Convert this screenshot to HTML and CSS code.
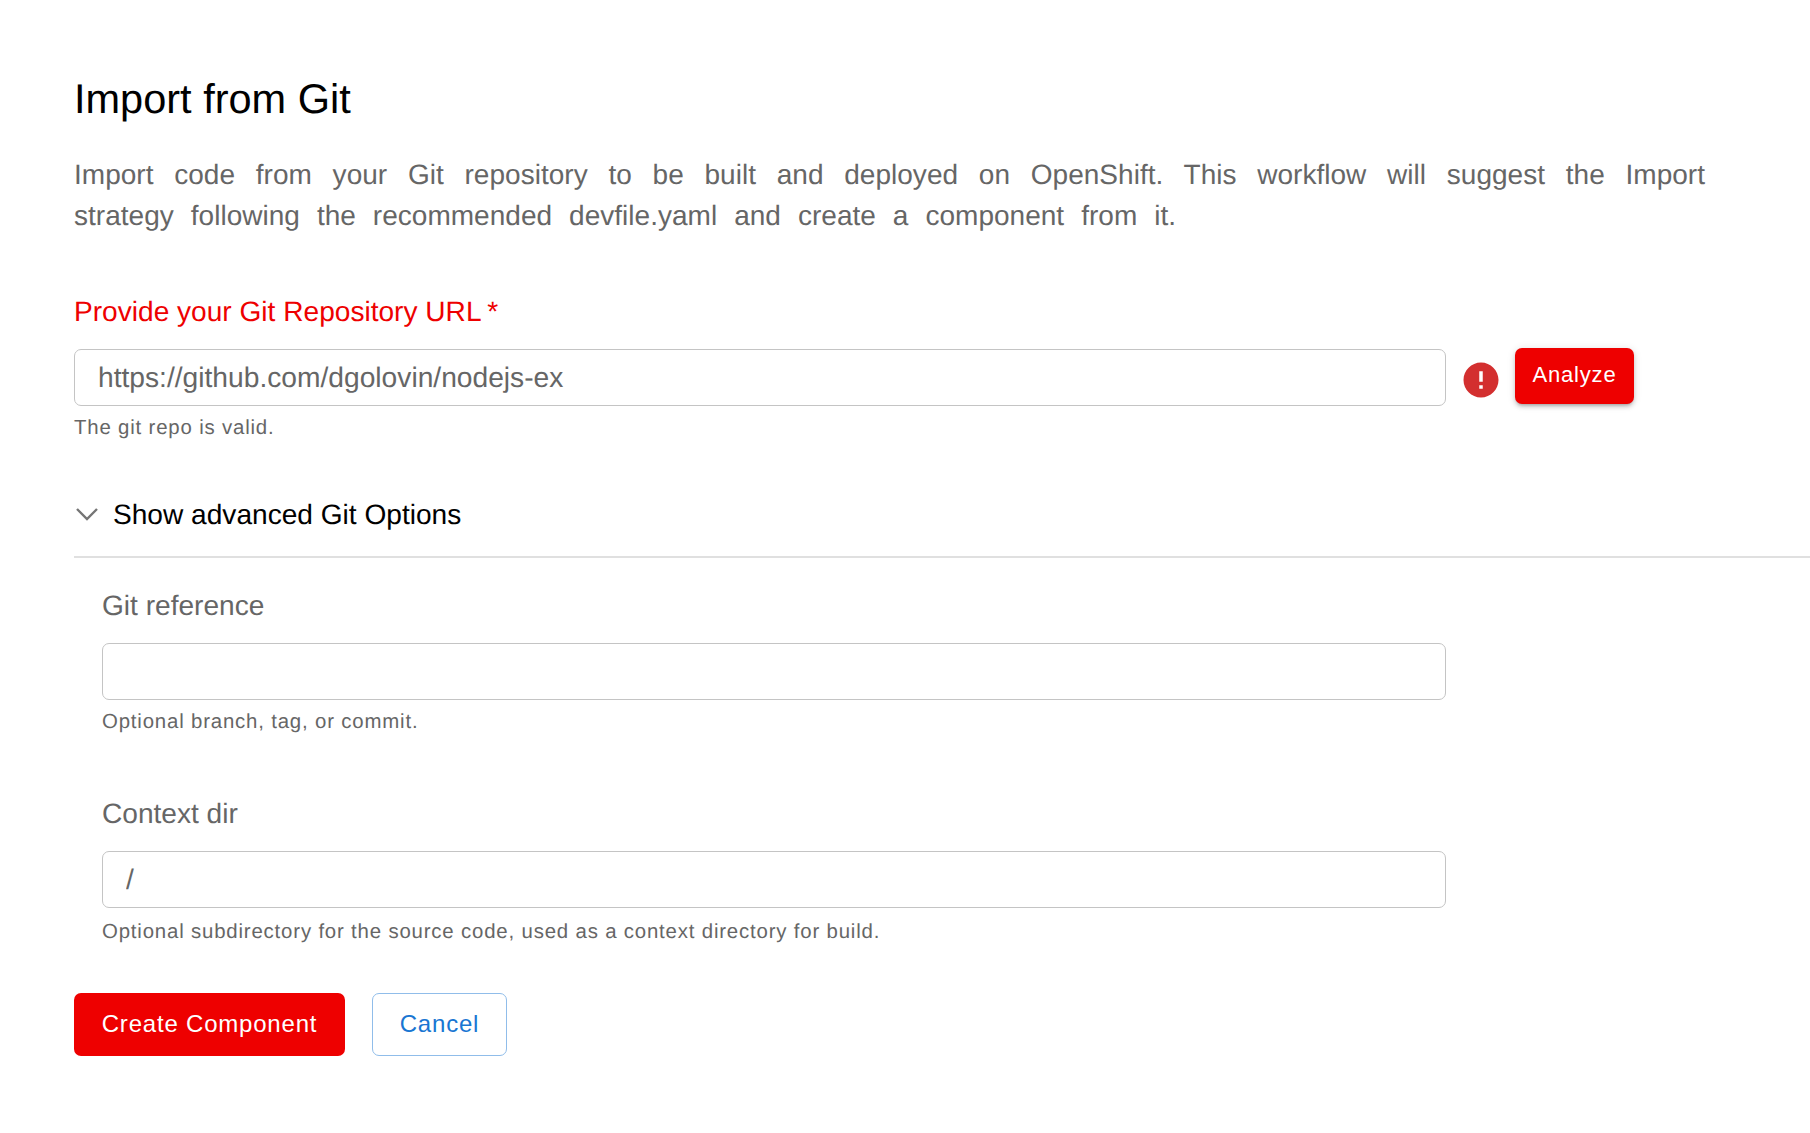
FILE: index.html
```html
<!DOCTYPE html>
<html lang="en">
<head>
    <meta charset="UTF-8">
    <title>Import from Git</title>
    <link rel="stylesheet" href="styles.css">
</head>
<body>
    <div class="page">
        <h1>Import from Git</h1>
        <p class="intro">Import code from your Git repository to be built and deployed on OpenShift. This workflow will suggest the Import strategy following the recommended devfile.yaml and create a component from it.</p>

        <label class="repo-label">Provide your Git Repository URL&thinsp;*</label>
        <div class="repo-row">
            <div class="field">
                <input class="text-input" type="text" value="https://github.com/dgolovin/nodejs-ex">
                <p class="help">The git repo is valid.</p>
            </div>
            <svg class="error-icon" viewBox="0 0 24 24"><path fill="#d32f2f" d="M12 2C6.48 2 2 6.48 2 12s4.48 10 10 10 10-4.48 10-10S17.52 2 12 2zm1 15h-2v-2h2v2zm0-4h-2V7h2v6z"/></svg>
            <button class="btn-analyze">Analyze</button>
        </div>

        <div class="accordion-head">
            <svg class="chevron" viewBox="0 0 22 13"><path fill="none" stroke="#757575" stroke-width="2.4" d="M1 1l10 10L21 1"/></svg>
            <span>Show advanced Git Options</span>
        </div>

        <div class="accordion-body">
            <div class="option">
                <label class="option-label">Git reference</label>
                <input class="text-input" type="text">
                <p class="help">Optional branch, tag, or commit.</p>
            </div>
            <div class="option">
                <label class="option-label">Context dir</label>
                <input class="text-input" type="text" value="/">
                <p class="help help-dir">Optional subdirectory for the source code, used as a context directory for build.</p>
            </div>
        </div>

        <div class="actions">
            <button class="btn-create">Create Component</button>
            <button class="btn-cancel">Cancel</button>
        </div>
    </div>
</body>
</html>
```

FILE: styles.css
```css
body {
    margin: 0;
    font-family: "Liberation Sans", Arial, sans-serif;
    background-color: #ffffff;
    text-rendering: geometricPrecision;
}
.page {
    padding: 74px 0 0 74px;
    height: 1059px;
    overflow: hidden;
}
h1 {
    margin: 0;
    font-size: 41.5px;
    font-weight: 400;
    line-height: 50px;
    color: #000000;
}
.intro {
    width: 1631px;
    margin: 30px 0 0;
    font-size: 28px;
    line-height: 41px;
    letter-spacing: 0.02px;
    word-spacing: 9.2px;
    text-align: justify;
    color: #666666;
}
.repo-label {
    display: block;
    margin-top: 58px;
    font-size: 28.1px;
    line-height: 36px;
    color: #ee0000;
}
.repo-row {
    display: flex;
    align-items: flex-start;
    margin-top: 19px;
}
.field {
    width: 1372px;
}
.text-input {
    display: block;
    box-sizing: border-box;
    width: 100%;
    height: 57px;
    padding: 0 23px;
    border: 1px solid #c4c4c4;
    border-radius: 7px;
    font-family: inherit;
    font-size: 28.2px;
    color: #666666;
    text-rendering: geometricPrecision;
    outline: none;
}
.help {
    margin: 9px 0 0;
    font-size: 20.4px;
    line-height: 27px;
    letter-spacing: 0.82px;
    color: #666666;
}
.help-dir {
    margin-top: 11px;
}
.error-icon {
    width: 42px;
    height: 42px;
    margin: 10px 0 0 14px;
}
.btn-analyze {
    width: 119px;
    height: 56px;
    margin: -1px 0 0 13px;
    padding: 0 0 2px;
    border: none;
    border-radius: 7px;
    background-color: #ee0000;
    color: #ffffff;
    font-family: inherit;
    font-size: 22px;
    letter-spacing: 0.8px;
    box-shadow: 0 3px 3px -2px rgba(0, 0, 0, 0.2), 0 3px 4px 0 rgba(0, 0, 0, 0.14), 0 1px 8px 0 rgba(0, 0, 0, 0.12);
}
.accordion-head {
    display: flex;
    align-items: center;
    margin-top: 31px;
    height: 83px;
    border-bottom: 2px solid #e0e0e0;
    font-size: 28.1px;
    color: #000000;
}
.chevron {
    width: 22px;
    height: 13px;
    margin: 0 15px 0 2px;
}
.accordion-body {
    padding: 30px 0 0 28px;
}
.option {
    width: 1344px;
    height: 208px;
}
.option-label {
    display: block;
    font-size: 28.1px;
    line-height: 36px;
    color: #666666;
    margin-bottom: 19px;
}
.actions {
    display: flex;
    gap: 27px;
    margin-top: -11px;
}
.btn-create, .btn-cancel {
    height: 63px;
    padding: 0 0 2px;
    border-radius: 7px;
    font-family: inherit;
    font-size: 24px;
    letter-spacing: 0.8px;
}
.btn-create {
    width: 271px;
    border: none;
    background-color: #ee0000;
    color: #ffffff;
}
.btn-cancel {
    width: 135px;
    border: 1px solid #90bdea;
    background-color: #ffffff;
    color: #1976d2;
}
```
